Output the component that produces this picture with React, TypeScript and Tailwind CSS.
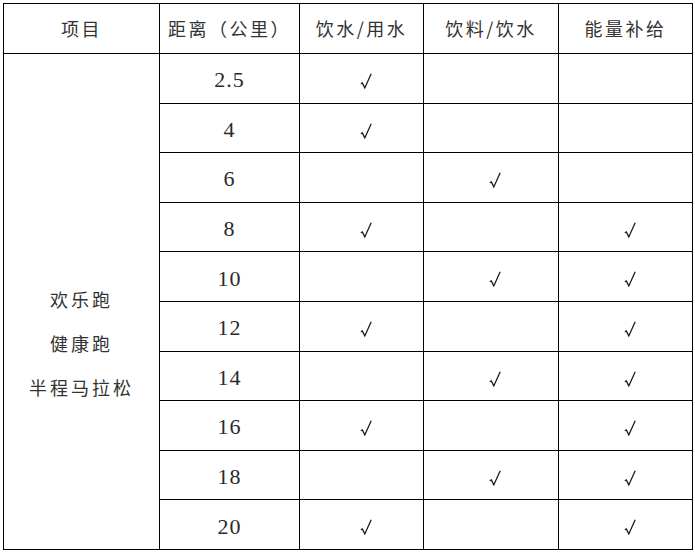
import React from "react";

const rows: [string, boolean, boolean, boolean][] = [
  ["2.5", true, false, false],
  ["4", true, false, false],
  ["6", false, true, false],
  ["8", true, false, true],
  ["10", false, true, true],
  ["12", true, false, true],
  ["14", false, true, true],
  ["16", true, false, true],
  ["18", false, true, true],
  ["20", true, false, true],
];

const cjk = { fontFamily: '"Noto Sans CJK SC", "Noto Sans", sans-serif' };
const num = { fontFamily: '"Liberation Serif", "Noto Sans CJK SC", serif' };

function Check({ show }: { show: boolean }) {
  return (
    <td className="border border-black text-center align-middle">
      {show ? (
        <span className="inline-flex pl-[8px] pt-[2px] align-middle">
          <svg width="12" height="16" viewBox="0 0 12 16" fill="none">
            <path d="M0.8 10.8 L2.3 10 L4.8 14.9 L11.2 0.8" stroke="#1a1a2a" strokeWidth="1.3" strokeLinejoin="miter" />
          </svg>
        </span>
      ) : null}
    </td>
  );
}

export default function App() {
  return (
    <div className="w-[695px] h-[553px] bg-white pt-[3px] pl-[3px]">
      <table className="border-collapse table-fixed w-[689px] text-[#222]">
        <colgroup>
          <col className="w-[156px]" />
          <col className="w-[140px]" />
          <col className="w-[124px]" />
          <col className="w-[135px]" />
          <col className="w-[134px]" />
        </colgroup>
        <thead>
          <tr className="h-[50px]">
            {["项目", "距离（公里）", "饮水/用水", "饮料/饮水", "能量补给"].map((t) => (
              <th
                key={t}
                className="border border-black text-center align-middle font-normal text-[18px] tracking-[2.5px] text-[#333]"
                style={cjk}
              >
                {t}
              </th>
            ))}
          </tr>
        </thead>
        <tbody>
          {rows.map((r, i) => (
            <tr key={r[0]} className="h-[49.6px]">
              {i === 0 ? (
                <td rowSpan={10} className="border border-black text-center align-middle">
                  <div
                    className="flex flex-col items-center gap-[16px] pt-[84px] text-[18px] tracking-[3px] text-[#333] leading-[28px]"
                    style={cjk}
                  >
                    <span>欢乐跑</span>
                    <span>健康跑</span>
                    <span>半程马拉松</span>
                  </div>
                </td>
              ) : null}
              <td className="border border-black text-center align-middle text-[22px] text-[#2a2a2a] tracking-[1px]" style={num}>
                <span className="inline-block pt-[3px]">{r[0]}</span>
              </td>
              <Check show={r[1]} />
              <Check show={r[2]} />
              <Check show={r[3]} />
            </tr>
          ))}
        </tbody>
      </table>
    </div>
  );
}
